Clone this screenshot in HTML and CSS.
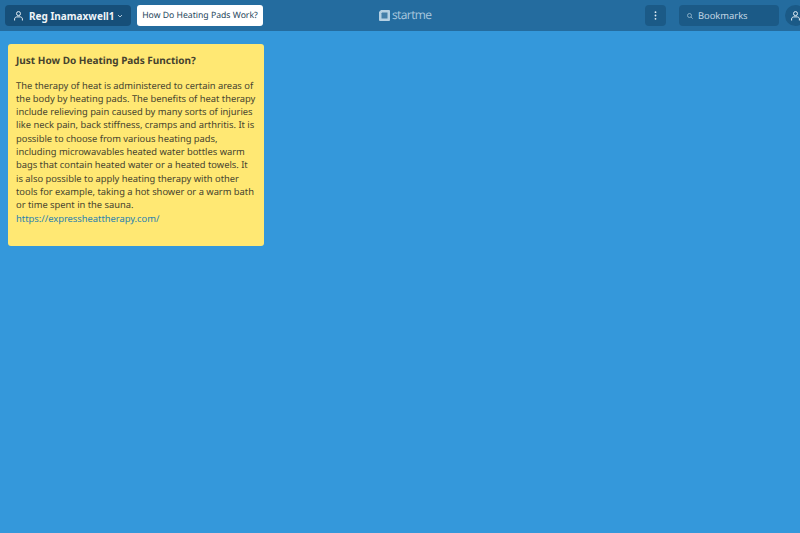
FILE: index.html
```html
<!DOCTYPE html>
<html lang="en">
  <head>
    <meta charset="UTF-8" />
    <meta name="viewport" content="width=device-width, initial-scale=1.0" />
    <title>Reg Inamaxwell1 - start.me</title>
    <link rel="stylesheet" href="styles.css">
  </head>
  <body>
    <header class="topbar">
      <div class="topbar-left">
        <button class="page-menu">
          <svg class="user-icon" width="9" height="10" viewBox="0 0 9 10">
            <circle cx="4.5" cy="2.600" r="2" />
            <path d="M.6 9.500V8c0-1.200 1-2.100 2.100-2.100h3.600C7.400 5.900 8.400 6.800 8.400 8v1.500" />
          </svg>
          <span class="page-name">Reg Inamaxwell1</span>
          <svg class="chevron" width="6" height="4" viewBox="0 0 6 4">
            <path d="M1 1l2 2 2-2" />
          </svg>
        </button>
        <div class="page-tab">How Do Heating Pads Work?</div>
      </div>

      <a class="logo" href="#">
        <svg width="11" height="11" viewBox="0 0 11 11">
          <path d="M2 0h8a1 1 0 0 1 1 1v9a1 1 0 0 1-1 1H1a1 1 0 0 1-1-1V2z" fill="#b4d0e3" />
          <path d="M3.200 2.500h5.300v6H2.500v-5.300z" fill="#447fa9" />
        </svg>
        <span>startme</span>
      </a>

      <div class="topbar-right">
        <button class="more-btn">
          <svg width="3" height="9" viewBox="0 0 3 9">
            <circle cx="1.500" cy="1.200" r=".9" />
            <circle cx="1.500" cy="4.500" r=".9" />
            <circle cx="1.500" cy="7.800" r=".9" />
          </svg>
        </button>
        <div class="search">
          <svg width="6" height="6" viewBox="0 0 6 6">
            <circle cx="2.500" cy="2.500" r="2" />
            <path d="M4 4l1.700 1.700" />
          </svg>
          <span>Bookmarks</span>
        </div>
        <button class="account-btn">
          <svg class="user-icon" width="9" height="10" viewBox="0 0 9 10">
            <circle cx="4.5" cy="2.600" r="2" />
            <path d="M.6 9.500V8c0-1.200 1-2.100 2.100-2.100h3.600C7.400 5.900 8.400 6.800 8.400 8v1.500" />
          </svg>
        </button>
      </div>
    </header>

    <main class="board">
      <section class="note">
        <h3>Just How Do Heating Pads Function?</h3>
        <p>
          The therapy of heat is administered to certain areas of the body by
          heating pads. The benefits of heat therapy include relieving pain
          caused by many sorts of injuries like neck pain, back stiffness,
          cramps and arthritis. It is possible to choose from various heating
          pads, including microwavables heated water bottles warm bags that
          contain heated water or a heated towels. It is also possible to apply
          heating therapy with other tools for example, taking a hot shower or a
          warm bath or time spent in the sauna.
          <br />
          <a href="#">https://expressheattherapy.com/</a>
        </p>
      </section>
    </main>
  </body>
</html>
```

FILE: styles.css
```css
html,
body {
  height: 100%;
}
body {
  margin: 0;
  overflow: hidden;
  font-family: "Noto Sans", sans-serif;
  text-rendering: geometricPrecision;
  background-color: #3498db;
}
button {
  border: none;
  font-family: inherit;
  padding: 0;
}
.topbar {
  height: 31px;
  display: flex;
  align-items: center;
  justify-content: space-between;
  position: relative;
  background-color: #246c9f;
  overflow: hidden;
}
.topbar-left {
  display: flex;
  align-items: center;
  gap: 6px;
  padding-left: 5px;
}
.topbar-right {
  display: flex;
  align-items: center;
  margin-right: -6px;
}
.user-icon {
  fill: none;
  stroke: #e4eef5;
  stroke-width: 1;
}
.page-menu {
  width: 126px;
  height: 21px;
  display: flex;
  align-items: center;
  padding-left: 9px;
  box-sizing: border-box;
  background-color: #164f79;
  border-radius: 4px;
  color: #eef4f8;
}
.page-name {
  margin-left: 6px;
  font-size: 10px;
  font-weight: 700;
  white-space: nowrap;
}
.chevron {
  margin-left: 2px;
  fill: none;
  stroke: #d5e3ee;
  stroke-width: 0.8;
}
.page-tab {
  width: 126px;
  height: 21px;
  line-height: 21px;
  box-sizing: border-box;
  text-align: center;
  background: #ffffff;
  border-radius: 3px;
  color: #26465c;
  font-size: 8.67px;
  white-space: nowrap;
}
.logo {
  position: absolute;
  left: 379px;
  top: 9px;
  display: flex;
  align-items: center;
  gap: 2px;
  color: #a9c8de;
  font-family: "Open Sans", sans-serif;
  font-size: 12px;
  letter-spacing: -0.6px;
  line-height: 12px;
  text-decoration: none;
}
.more-btn {
  width: 21px;
  height: 21px;
  display: flex;
  align-items: center;
  justify-content: center;
  background-color: #1b5a87;
  border-radius: 4px;
}
.more-btn circle {
  fill: #e4eef5;
}
.search {
  width: 100px;
  height: 21px;
  margin-left: 13px;
  display: flex;
  align-items: center;
  gap: 5px;
  padding-left: 8px;
  box-sizing: border-box;
  background-color: #1b5a87;
  border-radius: 4px;
  color: #c3d6e4;
  font-size: 9.33px;
}
.search svg {
  fill: none;
  stroke: #9dbcd2;
  stroke-width: 0.8;
}
.account-btn {
  width: 21px;
  height: 21px;
  margin-left: 6px;
  display: flex;
  align-items: center;
  justify-content: center;
  background-color: #1b5a87;
  border-radius: 50%;
}
.board {
  padding: 13px 8px;
}
.note {
  width: 256px;
  height: 202px;
  padding: 10px 8px;
  box-sizing: border-box;
  background-color: #ffe873;
  border-radius: 3px;
  color: #45422e;
  font-size: 9.33px;
  line-height: 13.33px;
}
.note h3 {
  margin: 0 0 11.5px;
  font-size: 10px;
  font-weight: 700;
  line-height: 13px;
}
.note p {
  margin: 0;
}
.note a {
  color: #1f7fb0;
  text-decoration: none;
}
```
